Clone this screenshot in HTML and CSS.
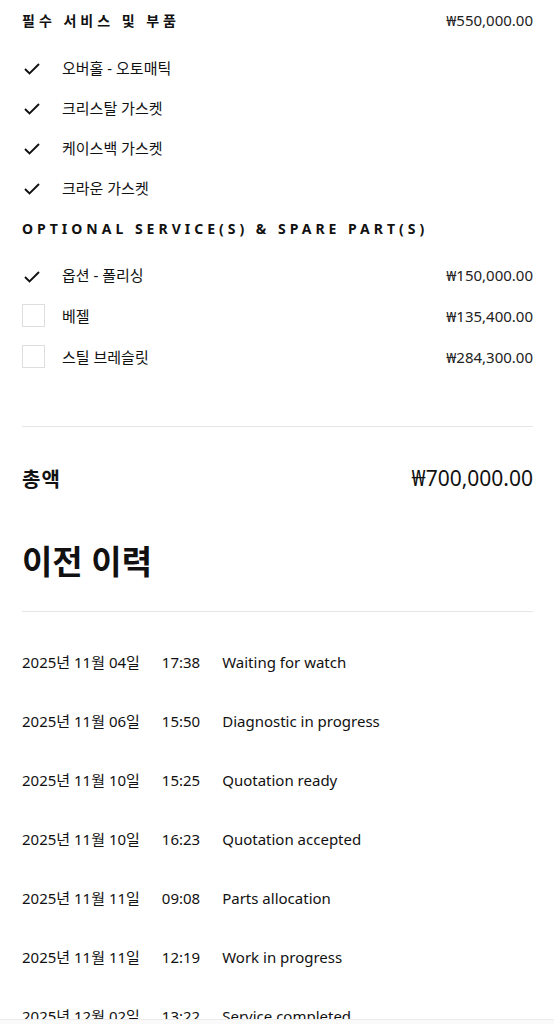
FILE: index.html
```html
<!DOCTYPE html>
<html lang="ko">
	<head>
		<meta charset="UTF-8">
		<title>견적</title>
		<link rel="stylesheet" href="styles.css">
	</head>
	<body>
		<section class="quote">
			<div class="row head">
				<h3 class="label">필수 서비스 및 부품</h3>
				<span class="price">₩550,000.00</span>
			</div>
			<ul class="items">
				<li class="item"><span class="mark"><svg width="16" height="12" viewBox="0 0 16 12"><path d="M1 6 L5.5 10.5 L15 1" fill="none" stroke="#111" stroke-width="1.9"/></svg></span><span class="name">오버홀 - 오토매틱</span></li>
				<li class="item"><span class="mark"><svg width="16" height="12" viewBox="0 0 16 12"><path d="M1 6 L5.5 10.5 L15 1" fill="none" stroke="#111" stroke-width="1.9"/></svg></span><span class="name">크리스탈 가스켓</span></li>
				<li class="item"><span class="mark"><svg width="16" height="12" viewBox="0 0 16 12"><path d="M1 6 L5.5 10.5 L15 1" fill="none" stroke="#111" stroke-width="1.9"/></svg></span><span class="name">케이스백 가스켓</span></li>
				<li class="item"><span class="mark"><svg width="16" height="12" viewBox="0 0 16 12"><path d="M1 6 L5.5 10.5 L15 1" fill="none" stroke="#111" stroke-width="1.9"/></svg></span><span class="name">크라운 가스켓</span></li>
			</ul>
			<div class="row head">
				<h3 class="label caps">Optional service(s) &amp; spare part(s)</h3>
			</div>
			<ul class="items opt">
				<li class="item"><span class="mark"><svg width="16" height="12" viewBox="0 0 16 12"><path d="M1 6 L5.5 10.5 L15 1" fill="none" stroke="#111" stroke-width="1.9"/></svg></span><span class="name">옵션 - 폴리싱</span><span class="price">₩150,000.00</span></li>
				<li class="item"><span class="mark"><span class="box"></span></span><span class="name">베젤</span><span class="price">₩135,400.00</span></li>
				<li class="item"><span class="mark"><span class="box"></span></span><span class="name">스틸 브레슬릿</span><span class="price">₩284,300.00</span></li>
			</ul>
			<hr>
			<div class="row total">
				<strong>총액</strong>
				<span>₩700,000.00</span>
			</div>
		</section>

		<section class="history">
			<h2>이전 이력</h2>
			<hr>
			<ol class="log">
				<li><span>2025년 11월 04일</span><span>17:38</span><span>Waiting for watch</span></li>
				<li><span>2025년 11월 06일</span><span>15:50</span><span>Diagnostic in progress</span></li>
				<li><span>2025년 11월 10일</span><span>15:25</span><span>Quotation ready</span></li>
				<li><span>2025년 11월 10일</span><span>16:23</span><span>Quotation accepted</span></li>
				<li><span>2025년 11월 11일</span><span>09:08</span><span>Parts allocation</span></li>
				<li><span>2025년 11월 11일</span><span>12:19</span><span>Work in progress</span></li>
				<li><span>2025년 12월 02일</span><span>13:22</span><span>Service completed</span></li>
			</ol>
		</section>

		<div class="bottom-bar"></div>
	</body>
</html>
```

FILE: styles.css
```css
* {
	box-sizing: border-box;
}
html, body {
	margin: 0;
	padding: 0;
}
body {
	background: #fff;
	color: #111;
	font-family: "Noto Sans", "Noto Sans CJK KR", sans-serif;
	padding: 0 21px 0 22px;
}
ul, ol {
	list-style: none;
	margin: 0;
	padding: 0;
}
hr {
	border: 0;
	border-top: 1px solid #e6e6e6;
	margin: 0;
}

.row {
	align-items: center;
	display: flex;
	justify-content: space-between;
}
.head {
	height: 40px;
}
.label {
	font-size: 14px;
	font-weight: bold;
	letter-spacing: 4px;
	margin: 0;
}
.caps {
	letter-spacing: 4px;
	text-transform: uppercase;
}
.price {
	color: #222;
	font-size: 15px;
}

.items {
	margin: 7px 0 1px;
}
.item {
	align-items: center;
	display: flex;
	height: 40px;
}
.opt {
	margin: 6px 0 49px;
}
.opt .item {
	height: 41px;
}
.mark {
	align-items: center;
	display: flex;
	width: 40px;
}
.mark svg {
	margin: 4px 0 0 2px;
}
.box {
	border: 1px solid #dedede;
	height: 23px;
	width: 23px;
}
.name {
	flex: 1;
	font-size: 15px;
}

.total {
	height: 60px;
	margin-top: 21px;
}
.total strong {
	font-size: 20px;
	letter-spacing: 1px;
}
.total span {
	font-size: 21px;
}

.history h2 {
	font-size: 33px;
	line-height: 40px;
	margin: 34px 0 29px;
}
.log {
	padding-top: 20px;
}
.log li {
	align-items: center;
	display: flex;
	font-size: 15px;
	gap: 22px;
	height: 59px;
	white-space: nowrap;
}

.bottom-bar {
	background: #fafafa;
	border-top: 1px solid #ececec;
	bottom: 0;
	height: 5px;
	left: 0;
	position: fixed;
	right: 0;
}
```
